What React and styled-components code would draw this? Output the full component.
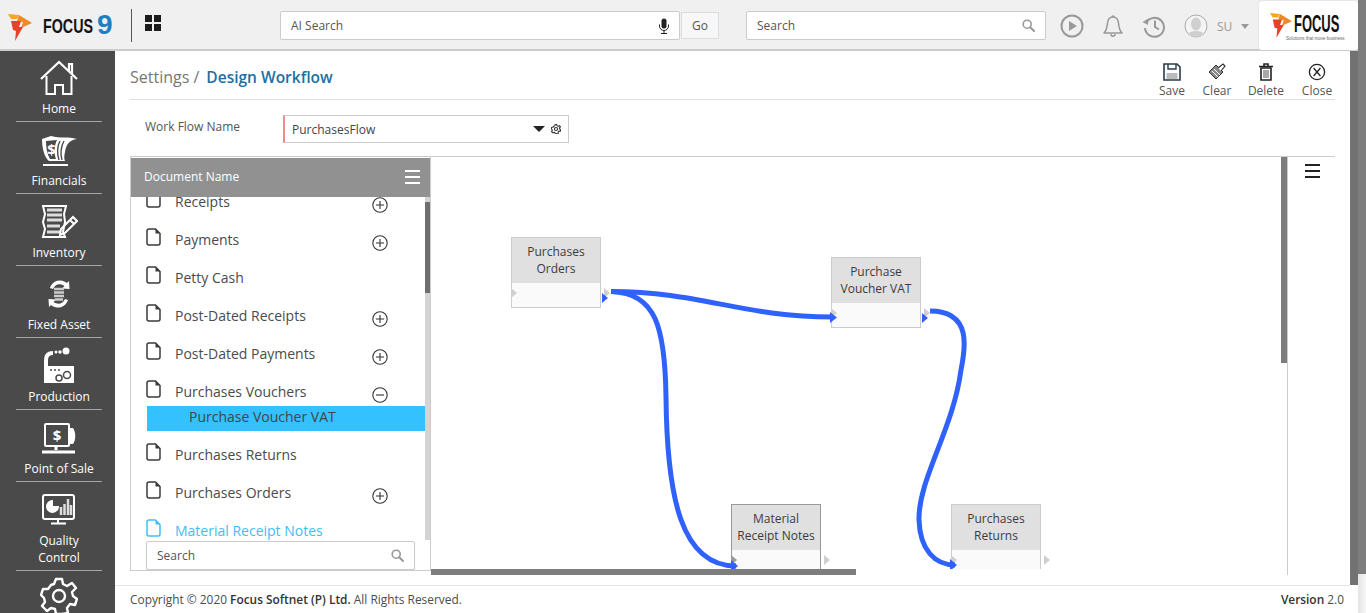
import React from 'react';
import styled, { createGlobalStyle } from 'styled-components';

const Global = createGlobalStyle`
  html, body { margin: 0; padding: 0; height: 613px; overflow: hidden; background: #fff; }
  * { box-sizing: border-box; }
  body { font-family: "Open Sans", "Liberation Sans", sans-serif; color: #444; }
`;

const Page = styled.div`
  position: relative;
  width: 1366px;
  height: 613px;
  overflow: hidden;
  display: flex;
  flex-direction: column;
`;

/* top bar */
const TopBar = styled.header`
  height: 51px;
  flex: none;
  display: flex;
  align-items: flex-start;
  background: #f0f0f0;
  border-bottom: 2px solid #ccc;
`;

const Brand = styled.div`
  width: 124px;
  height: 33px;
  margin: 9px 0 0 8px;
  flex: none;
  display: flex;
  align-items: flex-start;
  border-right: 1px solid #555;
  svg { margin-top: 5px; flex: none; }
`;

const BrandWord = styled.div`
  margin: 6px 0 0 11px;
  display: flex;
  font-family: "Liberation Sans", sans-serif;
  font-weight: 700;
  color: #141414;
  span {
    width: 50px;
    font-size: 21px;
    line-height: 22px;
    transform: scaleX(.68);
    transform-origin: left top;
  }
  b {
    margin: -4px 0 0 4px;
    font-size: 28px;
    line-height: 28px;
    color: #1f7fc4;
  }
`;

const Tiles = styled.div`
  width: 16px;
  height: 16px;
  margin: 15px 119px 0 13px;
  flex: none;
  display: grid;
  grid-template-columns: 7px 7px;
  grid-auto-rows: 7px;
  gap: 2px;
  i { background: #1c1c1c; }
`;

const SearchBox = styled.div`
  width: ${p => p.$w}px;
  height: 29px;
  margin-top: 11px;
  padding: 0 ${p => p.$pr || 10}px 0 10px;
  display: flex;
  align-items: center;
  justify-content: space-between;
  flex: none;
  background: #fff;
  border: 1px solid #ccc;
  border-radius: 2px;
  font-size: 12px;
  color: #555;
`;

const GoButton = styled.div`
  width: 38px;
  height: 27px;
  margin: 12px 27px 0 1px;
  flex: none;
  display: flex;
  align-items: center;
  justify-content: center;
  background: #f7f7f7;
  border: 1px solid #ddd;
  font-size: 12px;
  color: #555;
`;

const TopIcons = styled.div`
  margin: 13px 0 0 14px;
  height: 26px;
  width: 190px;
  display: flex;
  align-items: center;
  gap: 18px;
  flex: none;
`;

const UserTag = styled.div`
  display: flex;
  align-items: center;
  gap: 9px;
  font-size: 12px;
  color: #999;
`;

const Caret = styled.i`
  width: 0;
  height: 0;
  flex: none;
  border-left: ${p => p.$s || 4}px solid transparent;
  border-right: ${p => p.$s || 4}px solid transparent;
  border-top: ${p => p.$s || 5}px solid ${p => p.$c || '#999'};
`;

const LogoCard = styled.div`
  width: 99px;
  height: 49px;
  margin: 1px 0 0 9px;
  padding-left: 11px;
  flex: none;
  display: flex;
  align-items: center;
  gap: 2px;
  background: #fff;
  border-radius: 3px;
  box-shadow: 0 0 2px #ccc;
`;

const LogoText = styled.div`
  width: 48px;
  padding-top: 3px;
  font-family: "Liberation Sans", sans-serif;
  font-weight: 700;
  color: #111;
  span {
    display: block;
    font-size: 24px;
    line-height: 20px;
    transform: scaleX(.54);
    transform-origin: left top;
  }
  small {
    display: block;
    margin: 2px 0 0 -8px;
    font-size: 4.5px;
    line-height: 5px;
    font-weight: 400;
    color: #666;
    white-space: nowrap;
  }
`;

/* body */
const Body = styled.div`
  flex: 1;
  min-height: 0;
  display: flex;
`;

const Side = styled.nav`
  width: 115px;
  flex: none;
  background: #4a4a4a;
  overflow: hidden;
`;

const SideItem = styled.div`
  height: ${p => p.$h || 72}px;
  margin: 0 13px 0 16px;
  padding-top: ${p => p.$last ? 5 : 8}px;
  display: flex;
  flex-direction: column;
  align-items: center;
  border-bottom: ${p => p.$last ? 0 : '1px solid #a5a5a5'};
  color: #fff;
  font-size: 12px;
  line-height: 17px;
  text-align: center;
  svg { flex: none; height: 40px; margin-bottom: 2px; }
  span { max-width: 72px; }
  &:first-child { height: 71px; padding-top: 8px; }
  &:first-child svg { margin-bottom: 1px; }
`;

const Main = styled.main`
  flex: 1;
  min-width: 0;
  display: flex;
  flex-direction: column;
  position: relative;
`;

const Content = styled.div`
  flex: 1;
  min-height: 0;
  padding: 0 31px 0 15px;
  display: flex;
  flex-direction: column;
`;

const TitleRow = styled.div`
  height: 49px;
  flex: none;
  display: flex;
  justify-content: space-between;
  border-bottom: 1px solid #ddd;
`;

const Crumbs = styled.div`
  padding-top: 14px;
  font-size: 16px;
  line-height: 24px;
  color: #777;
  strong { margin-left: 7px; font-size: 15.5px; color: #1b6fa5; font-weight: 600; }
`;

const Tools = styled.div`
  display: flex;
  padding-top: 12px;
`;

const Tool = styled.div`
  width: ${p => p.$w}px;
  display: flex;
  flex-direction: column;
  align-items: center;
  font-size: 12px;
  line-height: 15px;
  color: #555;
  svg { height: 18px; margin-bottom: 2px; }
`;

const FormRow = styled.div`
  height: 57px;
  flex: none;
  display: flex;
  border-bottom: 1px solid #ccc;
  padding: 15px 0 0 15px;
`;

const FieldLabel = styled.label`
  width: 138px;
  font-size: 12px;
  line-height: 24px;
  color: #555;
`;

const Combo = styled.div`
  width: 286px;
  height: 28px;
  display: flex;
  align-items: center;
  gap: 6px;
  padding: 0 7px 0 7px;
  background: #fff;
  border: 1px solid #ccc;
  border-left: 2px solid #f18b8b;
  font-size: 12px;
  color: #444;
  span { flex: 1; padding-top: 1px; }
`;

const Work = styled.section`
  height: 418px;
  flex: none;
  display: flex;
`;

const DocPanel = styled.aside`
  position: relative;
  width: 301px;
  height: 414px;
  flex: none;
  border: 1px solid #ccc;
  border-top: 0;
  overflow: hidden;
`;

const DocHead = styled.div`
  height: 39px;
  margin-top: 1px;
  padding: 0 10px 2px 13px;
  display: flex;
  align-items: center;
  justify-content: space-between;
  background: #919191;
  color: #fff;
  font-size: 12px;
`;

const Burger = styled.div`
  width: 15px;
  display: grid;
  gap: 4px;
  i { height: 2px; background: ${p => p.$c}; }
`;

const DocList = styled.ul`
  height: 345px;
  margin: 0;
  padding: 0;
  list-style: none;
  overflow: hidden;
`;

const DocRows = styled.div`
  margin-top: -15px;
`;

const DocRow = styled.li`
  height: 38px;
  padding-left: 15px;
  display: flex;
  align-items: center;
  gap: 14px;
  font-size: 14px;
  color: ${p => p.$active ? '#44bdf5' : '#4b4b4b'};
  margin-bottom: ${p => p.$open ? -4 : 0}px;
  span { width: 184px; margin-right: -1px; }
  svg { flex: none; }
  svg:first-child { margin-top: -5px; }
  svg:last-child { margin-top: 7px; }
`;

const SubRow = styled.li`
  height: 25px;
  width: 278px;
  margin: 0 0 4px 16px;
  padding-left: 42px;
  font-size: 14px;
  line-height: 22px;
  color: #444;
  background: #33c1ff;
`;

const ListTrack = styled.div`
  position: absolute;
  top: 40px;
  right: 0;
  width: 5px;
  height: 343px;
  background: #d4d4d4;
  &::before {
    content: '';
    position: absolute;
    top: 5px;
    left: 0;
    right: 0;
    height: 91px;
    background: #6e6e6e;
  }
`;

const DocSearch = styled(SearchBox)`
  position: absolute;
  left: 15px;
  top: 384px;
  margin: 0;
  box-shadow: 0 1px 1px #ddd;
`;

const StageCol = styled.div`
  width: 850px;
  flex: none;
`;

const Stage = styled.div`
  position: relative;
  height: 412px;
  overflow: hidden;
  background: #fff;
`;

const Edges = styled.svg`
  position: absolute;
  left: 0;
  top: 0;
`;

const FlowNode = styled.div`
  position: absolute;
  left: ${p => p.$x}px;
  top: ${p => p.$y}px;
  width: 90px;
  height: 71px;
  background: #fafafa;
  border: 1px solid ${p => p.$dark ? '#999' : '#ccc'};
`;

const NodeHead = styled.div`
  height: 45px;
  padding-top: 5px;
  background: #e0e0e0;
  font-size: 12px;
  line-height: 17px;
  text-align: center;
  color: #3c3c3c;
`;

const Port = styled.i`
  position: absolute;
  top: 50px;
  left: ${p => p.$left}px;
  width: 0;
  height: 0;
  border-top: 5px solid transparent;
  border-bottom: 5px solid transparent;
  border-left: 6px solid ${p => p.$c || '#cfcfcf'};
`;

const HScroll = styled.div`
  width: 425px;
  height: 6px;
  background: #7d7d7d;
`;

const VThumbWrap = styled.div`
  width: 7px;
  flex: none;
  border-right: 1px solid #ccc;
  height: 418px;
  i { display: block; width: 6px; height: 206px; background: #7d7d7d; }
`;

const RightCol = styled.div`
  flex: 1;
  padding: 7px 0 0 17px;
`;

const Footer = styled.footer`
  height: 28px;
  flex: none;
  margin-right: 16px;
  padding: 0 6px 1px 15px;
  display: flex;
  align-items: center;
  justify-content: space-between;
  background: #fff;
  border-top: 1px solid #e6e6e6;
  font-size: 11.9px;
  color: #4c4c4c;
  b { font-weight: 600; color: #333; }
`;

/* page scroll bars */
const InnerBar = styled.div`
  position: absolute;
  top: 0;
  right: 8px;
  width: 8px;
  height: 534px;
  background: #727272;
`;

const OuterBar = styled.div`
  position: absolute;
  top: 0;
  right: 0;
  width: 8px;
  height: 613px;
  background: #7d7d7d;
  &::after {
    content: '';
    position: absolute;
    top: 574px;
    left: 0;
    right: 0;
    height: 39px;
    background: linear-gradient(90deg, #e4e4e4, #f6f6f6);
  }
`;

const Flame = ({ size = 24 }) => (
  <svg width={size} height={size * 27 / 24} viewBox="0 0 24 27">
    <path d="M0 0 L11 1 L9 5 L3 5 Z" fill="#f5a623" />
    <path d="M11 1 L24 9 L13 14 L15 8 L9 7 Z" fill="#f08a24" />
    <path d="M3 7 L13 7 L11 13 L15 13 L7 27 L8 17 L5 16 Z" fill="#e4432a" />
  </svg>
);

const Mic = () => (
  <svg width="12" height="16" viewBox="0 0 12 16">
    <rect x="3.5" y="0.5" width="5" height="10" rx="2.5" fill="#222" />
    <path d="M1.5 6.5 V8 a4.5 4.5 0 0 0 9 0 V6.5 M6 12.5 V15 M3 15.5 H9" fill="none" stroke="#222" strokeWidth="1" />
  </svg>
);

const Loupe = ({ c = '#999' }) => (
  <svg width="13" height="13" viewBox="0 0 13 13">
    <circle cx="5.2" cy="5.2" r="4" fill="none" stroke={c} strokeWidth="1.6" />
    <path d="M8.2 8.2 L12 12" stroke={c} strokeWidth="2" strokeLinecap="round" />
  </svg>
);

const PlayIcon = () => (
  <svg width="24" height="24" viewBox="0 0 24 24">
    <circle cx="12" cy="12" r="10.5" fill="none" stroke="#999" strokeWidth="2" />
    <path d="M9 7 L17 12 L9 17 Z" fill="#999" />
  </svg>
);

const BellIcon = () => (
  <svg width="22" height="24" viewBox="0 0 22 24">
    <path d="M2 19 C5 16 5 13 5.5 9 C6 5 8 3 11 3 C14 3 16 5 16.5 9 C17 13 17 16 20 19 Z" fill="none" stroke="#999" strokeWidth="1.5" strokeLinejoin="round" />
    <path d="M9 20 a2 2.2 0 0 0 4 0 M10 3 a1 1 0 0 1 2 0" fill="none" stroke="#999" strokeWidth="1.5" />
  </svg>
);

const HistoryIcon = () => (
  <svg width="24" height="24" viewBox="0 0 24 24">
    <path d="M4 9 A9.5 9.5 0 1 1 3 14" fill="none" stroke="#999" strokeWidth="2" />
    <path d="M0.5 8 L6 11 L6.5 4.5 Z" fill="#999" />
    <path d="M13 6.5 V13 L17 15.5" fill="none" stroke="#999" strokeWidth="2" />
  </svg>
);

const Avatar = () => (
  <svg width="24" height="24" viewBox="0 0 24 24">
    <circle cx="12" cy="12" r="11" fill="#f4f4f4" stroke="#aaa" />
    <ellipse cx="12" cy="10" rx="5" ry="6.5" fill="#cfcfcf" />
    <path d="M4 20 C6 16 18 16 20 20 C16 24 8 24 4 20 Z" fill="#cfcfcf" />
  </svg>
);

const white = { fill: 'none', stroke: '#fff', strokeWidth: 2 };

const HomeIcon = () => (
  <svg width="38" height="40" viewBox="0 0 38 40">
    <path d="M1 20 L19 3 L37 20 M29 12 V5 H32 V15" {...white} strokeWidth="2.2" />
    <path d="M6.5 17 V35 H15 V26 H23 V35 H31.5 V17" {...white} />
  </svg>
);

const MoneyIcon = () => (
  <svg width="38" height="40" viewBox="0 0 38 40">
    <path d="M2 9 L11 6 C20 9 28 6 37 9 C29 10 26 15 25 22 C24 26 24 29 25 31 H9 C4 27 2 17 2 9 Z" fill="#fff" />
    <path d="M6 11 L17 10 C14 16 14 24 16 29 H10 C7 24 6 17 6 11 Z" fill="#4a4a4a" />
    <path d="M20 11 C17 16 17 24 19 30 M24 11 C21 16 20 24 22 30" fill="none" stroke="#4a4a4a" strokeWidth="1.4" />
    <path d="M3 35 H28" {...white} />
    <text x="11.5" y="25" textAnchor="middle" fontSize="15" fontWeight="700" fill="#fff" fontFamily="Open Sans">$</text>
  </svg>
);

const InvoiceIcon = () => (
  <svg width="38" height="40" viewBox="0 0 38 40">
    <path d="M3 4 H26 L24 12 L25 20 L23 30 L25 35 H3 L5 27 L3 20 L5 12 Z" {...white} />
    <path d="M7 8 H22 M7 13 H22 M7 18 H22 M7 24 H20 M7 30 H20" stroke="#ddd" strokeWidth="3" />
    <path d="M20 33 L21 27 L33 15 L37 19 L25 31 Z M30 18 L34 22" {...white} />
  </svg>
);

const AssetIcon = () => (
  <svg width="38" height="40" viewBox="0 0 38 40">
    <path d="M10 14 A10.500 10.500 0 0 1 27 9 L29 7 L29.500 15 L22 14.500 L24.500 12 C20 9 15 10 13 15 Z" fill="#fff" />
    <path d="M28 26 A10.500 10.500 0 0 1 11 31 L9 33 L8.500 25 L16 25.500 L13.500 28 C18 31 23 30 25 25 Z" fill="#fff" />
    <path d="M14 15 H24 M14 18.500 H24 M14 22 H24 M15 25.500 H23" stroke="#ccc" strokeWidth="2.4" />
  </svg>
);

const PlantIcon = () => (
  <svg width="38" height="40" viewBox="0 0 38 40">
    <path d="M6 37 V14 C6 9 9 7 13 7" {...white} strokeWidth="4" />
    <circle cx="16" cy="6" r="1.5" fill="#fff" />
    <circle cx="20" cy="6" r="1.7" fill="#fff" />
    <circle cx="26" cy="5" r="3.5" fill="#fff" />
    <rect x="5" y="20" width="29" height="17" fill="#fff" />
    <path d="M10 24 h2 M14 24 h2 M18 24 h2" stroke="#4a4a4a" strokeWidth="1.5" />
    <circle cx="19" cy="32" r="3" fill="#fff" stroke="#4a4a4a" strokeWidth="1.5" />
    <circle cx="27" cy="29" r="3.5" fill="#fff" stroke="#4a4a4a" strokeWidth="1.5" />
  </svg>
);

const PosIcon = () => (
  <svg width="38" height="40" viewBox="0 0 38 40">
    <rect x="5" y="6" width="24" height="22" rx="1" {...white} />
    <path d="M29 10 H33 C36 14 36 22 33 26 H29 Z" fill="#fff" />
    <path d="M16 28 V32 M2 34 H35" {...white} strokeWidth="3" />
    <text x="17" y="23" textAnchor="middle" fontSize="15" fontWeight="700" fill="#fff" fontFamily="Open Sans">$</text>
  </svg>
);

const QualityIcon = () => (
  <svg width="38" height="40" viewBox="0 0 38 40">
    <rect x="3" y="5" width="31" height="24" rx="2" {...white} />
    <path d="M18 29 V33 M11 33.500 H26" {...white} />
    <path d="M13 10 A6.500 6.500 0 1 0 19 16 H13 Z" fill="#fff" />
    <path d="M21 25 V17 M24.500 25 V14 M28 25 V9 M31 25 V15" stroke="#ddd" strokeWidth="2.5" />
  </svg>
);

const GearIcon = ({ size = 38, c = '#fff', w = 2.4 }) => (
  <svg width={size} height={size} viewBox="0 0 38 38">
    <path d="M16 2 H22 L23 7 L27 9 L32 6 L36 11 L32 15 L33 19 L37 22 L35 28 L30 27 L27 31 L28 36 L22 37 H16 L15 32 L11 31 L7 34 L2 29 L5 25 L4 21 L1 18 L3 12 L8 12 L11 8 L14 7 Z" fill="none" stroke={c} strokeWidth={w} strokeLinejoin="round" />
    <circle cx="19" cy="19" r="6" fill="none" stroke={c} strokeWidth={w} />
  </svg>
);

const SaveIcon = () => (
  <svg width="18" height="18" viewBox="0 0 18 18">
    <path d="M1 1 H14 L17 4 V17 H1 Z" fill="none" stroke="#2b3a4a" strokeWidth="1.6" />
    <path d="M5 1 V6 H13 V1" fill="none" stroke="#2b3a4a" strokeWidth="1.4" />
    <rect x="3.5" y="10" width="11" height="6" fill="#bbb" />
  </svg>
);

const BrushIcon = () => (
  <svg width="18" height="18" viewBox="0 0 18 18">
    <path d="M1 10 L8 3 L15 10 L8 17 Z" fill="#888" stroke="#333" strokeWidth="1" transform="translate(0 -1)" />
    <path d="M4 8 L10 14 M6 6 L12 12" stroke="#fff" strokeWidth="1" />
    <path d="M10 5 L15 1 L17 3 L13 8" fill="#fff" stroke="#333" strokeWidth="1.2" />
  </svg>
);

const TrashIcon = () => (
  <svg width="16" height="18" viewBox="0 0 16 18">
    <path d="M1 3.500 H15 M6 3 V1 H10 V3" fill="none" stroke="#222" strokeWidth="1.6" />
    <path d="M3 5 H13 V17 H3 Z" fill="none" stroke="#222" strokeWidth="1.6" />
    <path d="M6 7 V15 M8 7 V15 M10 7 V15" stroke="#555" strokeWidth="1" />
  </svg>
);

const CloseIcon = () => (
  <svg width="18" height="18" viewBox="0 0 18 18">
    <circle cx="9" cy="9" r="7.600" fill="none" stroke="#222" strokeWidth="1.3" />
    <path d="M5.600 5 L12.400 13 M12.400 5 L5.600 13" stroke="#222" strokeWidth="1.3" />
  </svg>
);

const DocIcon = ({ c = '#3b3b3b' }) => (
  <svg width="15" height="18" viewBox="0 0 15 18">
    <path d="M3 1 H9.500 L14 5.500 V15 a2 2 0 0 1 -2 2 H3 a2 2 0 0 1 -2 -2 V3 a2 2 0 0 1 2 -2 Z" fill="none" stroke={c} strokeWidth="1.5" />
    <path d="M9.500 1 L14 5.500 H9.500 Z" fill={c} />
  </svg>
);

const Toggle = ({ open }) => (
  <svg width="16" height="16" viewBox="0 0 16 16">
    <circle cx="8" cy="8" r="7.200" fill="none" stroke="#333" strokeWidth="1.1" />
    <path d={open ? 'M4 8 H12' : 'M4 8 H12 M8 4 V12'} stroke="#333" strokeWidth="1.1" />
  </svg>
);

const navItems = [
  { label: 'Home', Icon: HomeIcon },
  { label: 'Financials', Icon: MoneyIcon },
  { label: 'Inventory', Icon: InvoiceIcon },
  { label: 'Fixed Asset', Icon: AssetIcon },
  { label: 'Production', Icon: PlantIcon },
  { label: 'Point of Sale', Icon: PosIcon },
  { label: 'Quality Control', Icon: QualityIcon, h: 89 },
];

const docs = [
  { name: 'Receipts', toggle: true },
  { name: 'Payments', toggle: true },
  { name: 'Petty Cash' },
  { name: 'Post-Dated Receipts', toggle: true },
  { name: 'Post-Dated Payments', toggle: true },
  { name: 'Purchases Vouchers', toggle: true, open: true, child: 'Purchase Voucher VAT' },
  { name: 'Purchases Returns' },
  { name: 'Purchases Orders', toggle: true },
  { name: 'Material Receipt Notes', active: true },
];

const nodes = [
  { id: 'po', x: 80, y: 80, lines: ['Purchases', 'Orders'] },
  { id: 'pv', x: 400, y: 100, lines: ['Purchase', 'Voucher VAT'] },
  { id: 'mr', x: 300, y: 347, lines: ['Material', 'Receipt Notes'], dark: true },
  { id: 'pr', x: 520, y: 347, lines: ['Purchases', 'Returns'] },
];

const blue = { fill: 'none', stroke: '#2f62fb', strokeWidth: 5 };

export default function App() {
  return (
    <Page>
      <Global />
      <TopBar>
        <Brand>
          <Flame />
          <BrandWord><span>FOCUS</span><b>9</b></BrandWord>
        </Brand>
        <Tiles><i /><i /><i /><i /></Tiles>
        <SearchBox $w={400} $pr={9}>AI Search<Mic /></SearchBox>
        <GoButton>Go</GoButton>
        <SearchBox $w={300}>Search<Loupe /></SearchBox>
        <TopIcons>
          <PlayIcon />
          <BellIcon />
          <HistoryIcon />
          <UserTag>
            <Avatar />
            <span>SU</span>
            <Caret />
          </UserTag>
        </TopIcons>
        <LogoCard>
          <Flame size={22} />
          <LogoText><span>FOCUS</span><small>Solutions that move business</small></LogoText>
        </LogoCard>
      </TopBar>

      <Body>
        <Side>
          {navItems.map(({ label, Icon, h }) => (
            <SideItem key={label} $h={h}>
              <Icon />
              <span>{label}</span>
            </SideItem>
          ))}
          <SideItem $last><GearIcon /></SideItem>
        </Side>

        <Main>
          <Content>
            <TitleRow>
              <Crumbs>Settings /<strong>Design Workflow</strong></Crumbs>
              <Tools>
                <Tool $w={58}><SaveIcon />Save</Tool>
                <Tool $w={32}><BrushIcon />Clear</Tool>
                <Tool $w={66}><TrashIcon />Delete</Tool>
                <Tool $w={36}><CloseIcon />Close</Tool>
              </Tools>
            </TitleRow>

            <FormRow>
              <FieldLabel>Work Flow Name</FieldLabel>
              <Combo>
                <span>PurchasesFlow</span>
                <Caret $c="#222" $s={6} />
                <GearIcon size={10} c="#333" w={4} />
              </Combo>
            </FormRow>

            <Work>
              <DocPanel>
                <DocHead>
                  Document Name
                  <Burger $c="#fff"><i /><i /><i /></Burger>
                </DocHead>
                <DocList>
                  <DocRows>
                    {docs.map(d => (
                      <React.Fragment key={d.name}>
                        <DocRow $active={d.active} $open={d.open}>
                          <DocIcon c={d.active ? '#44bdf5' : undefined} />
                          <span>{d.name}</span>
                          {d.toggle && <Toggle open={d.open} />}
                        </DocRow>
                        {d.child && <SubRow>{d.child}</SubRow>}
                      </React.Fragment>
                    ))}
                  </DocRows>
                </DocList>
                <ListTrack />
                <DocSearch $w={269}>Search<Loupe /></DocSearch>
              </DocPanel>

              <StageCol>
                <Stage>
                  {nodes.map(n => (
                    <FlowNode key={n.id} $x={n.x} $y={n.y} $dark={n.dark}>
                      <NodeHead>{n.lines[0]}<br />{n.lines[1]}</NodeHead>
                      <Port $left={-1} $c={n.dark ? '#999' : undefined} />
                      <Port $left={92} />
                    </FlowNode>
                  ))}
                  <Edges width="850" height="412" viewBox="0 0 850 412">
                    <path d="M180 134.500 C270 134.500 310 160 402 160" {...blue} />
                    <path d="M180 134.500 C225 136 234 170 235 240 C236 340 250 409 305 409" {...blue} />
                    <path d="M499 154 C542 154 534 193 530 213 C522 273 487 323 488 363 C489 393 504 408 524 408" {...blue} />
                    <path d="M171 136 L177 141 L171 146 Z M399 155 L406 160.500 L399 166 Z M300 403 L307 409 L300 415 Z M519 402 L526 408 L519 414 Z M491 156 L497 161 L491 166 Z" fill="#2f62fb" />
                  </Edges>
                </Stage>
                <HScroll />
              </StageCol>

              <VThumbWrap><i /></VThumbWrap>
              <RightCol><Burger $c="#222"><i /><i /><i /></Burger></RightCol>
            </Work>
          </Content>

          <Footer>
            <span>Copyright © 2020 <b>Focus Softnet (P) Ltd.</b> All Rights Reserved.</span>
            <span><b>Version</b> 2.0</span>
          </Footer>

          <InnerBar />
        </Main>
      </Body>
      <OuterBar />
    </Page>
  );
}
